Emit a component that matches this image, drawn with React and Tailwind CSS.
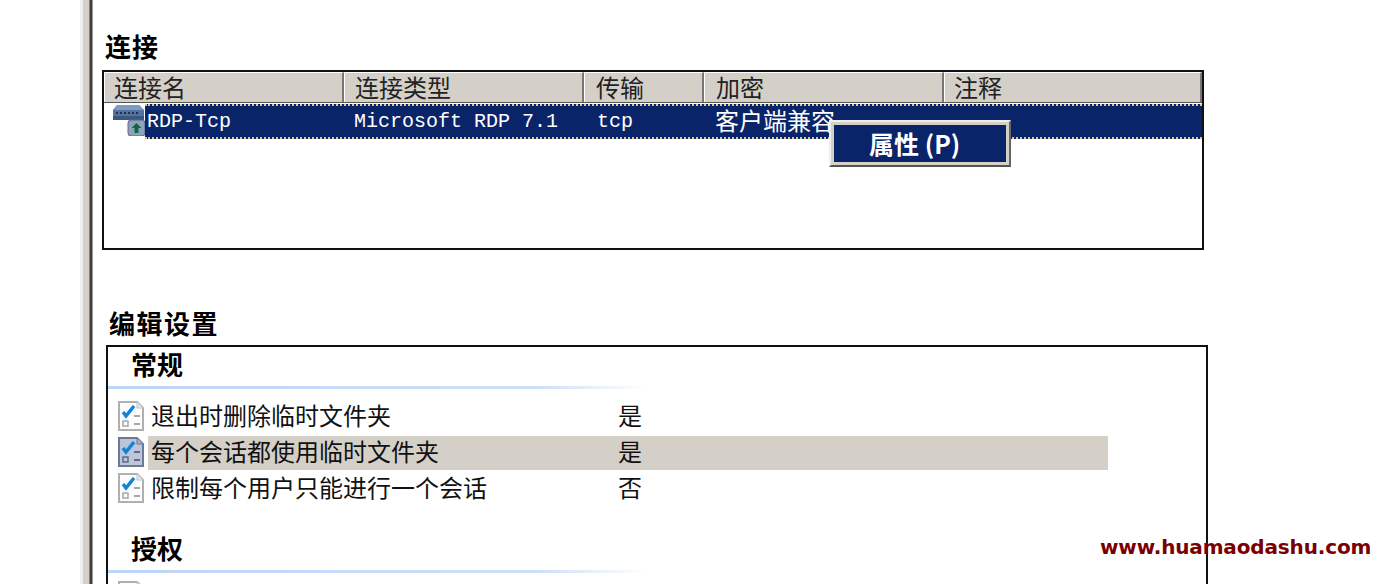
import React from 'react';

const cjk = "font-['Noto_Sans_CJK_SC','Liberation_Sans',sans-serif]";
const mono = "font-['Liberation_Mono',monospace]";

const columns = [
  { label: '连接名', width: 'w-[240px] pl-[9px]' },
  { label: '连接类型', width: 'w-[240px] pl-[10px]' },
  { label: '传输', width: 'w-[120px] pl-[11px]' },
  { label: '加密', width: 'w-[240px] pl-[11px]' },
  { label: '注释', width: 'flex-1 pl-[9px]' },
];

const NetworkIcon = () => (
  <svg width="36" height="32" viewBox="0 0 36 32" className="shrink-0">
    <path d="M5 1h22l5 5v10H1V6z" fill="#56739f" />
    <path d="M5 1h22l4 5H2z" fill="#7f9bc2" />
    <rect x="1" y="12" width="31" height="4" fill="#3d5680" />
    <path d="M4 9h2M8 9h2M12 9h2M16 9h2M20 9h2M24 9h2" stroke="#20304f" strokeWidth="2" />
    <rect x="16" y="16" width="17" height="16" rx="3" fill="#8fa1bd" stroke="#59688a" />
    <path d="M24.500 19l5 5h-3v5h-4v-5h-3z" fill="#0b6b3a" />
  </svg>
);

const PolicyIcon = ({ active }) => (
  <svg width="26" height="30" viewBox="0 0 26 30" className="shrink-0 self-center">
    <path d="M1 1h18l6 6v22H1z" fill={active ? '#bcc6d8' : '#fdfdfd'} stroke={active ? '#6b7896' : '#b0b0b0'} strokeWidth="2" />
    <path d="M19 1v6h6" fill={active ? '#a6b1c8' : '#e6e6e6'} stroke={active ? '#6b7896' : '#c4c4c4'} />
    <path d="M5 11l3 4 8-10" fill="none" stroke="#1283d8" strokeWidth="3.500" />
    <path d="M16 15h6M16 23h6" stroke={active ? '#5f6b88' : '#a8a8a8'} strokeWidth="2" />
    <rect x="5" y="20" width="5" height="5" fill="none" stroke={active ? '#5f6b88' : '#a8a8a8'} strokeWidth="1.500" />
  </svg>
);

const SectionHeading = ({ children }) => (
  <div>
    <div className="h-[39px] pl-[23px] text-[26px] leading-[34px] font-bold text-black">{children}</div>
    <div className="h-[3px] w-[540px] bg-gradient-to-r from-[#bcd5f5] via-[#cfe0f8] via-80% to-white"></div>
  </div>
);

const SettingRow = ({ label, value, active }) => (
  <div className="flex h-[36px] items-end pl-[10px]">
    <PolicyIcon active={active} />
    <div className={`ml-[4px] flex h-[34px] w-[960px] items-start ${active ? 'bg-[#d4d0c8]' : ''}`}>
      <span className="w-[470px] pl-[3px] text-[24px] leading-[30px] text-[#111]">{label}</span>
      <span className="text-[24px] leading-[30px] text-[#111]">{value}</span>
    </div>
  </div>
);

export default function App() {
  return (
    <div className={`relative flex h-[584px] w-[1400px] overflow-hidden bg-white ${cjk}`}>
      <div className="ml-[80px] flex w-[14px] shrink-0">
        <div className="w-[3px] bg-[#efefef]"></div>
        <div className="w-[6px] bg-[#d4d0c8]"></div>
        <div className="w-[1px] bg-[#808080]"></div>
        <div className="w-[2px] bg-[#404040]"></div>
        <div className="w-[1px] bg-[#9b9b9b]"></div>
      </div>

      <div className="flex-1 pl-[8px] pt-[30px]">
        <div className="h-[40px] pl-[3px] text-[26px] leading-[32px] font-bold tracking-[1px] text-black">连接</div>

        <div className="relative h-[180px] w-[1102px] border-2 border-[#111] bg-white">
          <div className="flex h-[31px] border-b border-[#555] bg-[#d4d0c8]">
            {columns.map((col) => (
              <div
                key={col.label}
                className={`${col.width} h-[30px] border-t border-l border-t-white border-l-white border-r-2 border-r-[#777] text-[24px] leading-[28px] text-[#222]`}
              >
                {col.label}
              </div>
            ))}
          </div>

          <div className="flex h-[36px] items-center">
            <div className="-mt-[3px] w-[41px] shrink-0 pl-[8px]">
              <NetworkIcon />
            </div>
            <div className="flex h-[35px] flex-1 items-center border-y-2 border-dotted border-[#d8c98a] bg-[#0a246a] text-white">
              <span className={`${mono} mt-[1px] w-[209px] pl-[2px] text-[20px]`}>RDP-Tcp</span>
              <span className={`${mono} mt-[1px] w-[243px] text-[20px]`}>Microsoft RDP 7.1</span>
              <span className={`${mono} mt-[1px] w-[118px] text-[20px]`}>tcp</span>
              <span className="-mt-[2px] text-[24px] leading-[30px]">客户端兼容</span>
            </div>
          </div>

          <div className="absolute left-[725px] top-[48px] h-[47px] w-[182px] border-2 border-t-[#eeeeee] border-l-[#eeeeee] border-r-[#666] border-b-[#555] bg-[#d4d0c8] p-[3px]">
            <div className="flex h-full items-center bg-[#0a246a] pl-[35px] text-[25px] font-bold text-white">
              属性 (P)
            </div>
          </div>
        </div>

        <div className="mt-[56px] h-[39px] pl-[7px] text-[26px] leading-[34px] font-bold tracking-[1.500px] text-black">编辑设置</div>

        <div className="ml-[4px] h-[300px] w-[1102px] border-2 border-[#111] bg-white">
          <SectionHeading>常规</SectionHeading>
          <div className="mt-[9px]">
            <SettingRow label="退出时删除临时文件夹" value="是" />
            <SettingRow label="每个会话都使用临时文件夹" value="是" active />
            <SettingRow label="限制每个用户只能进行一个会话" value="否" />
          </div>
          <div className="mt-[25px]">
            <SectionHeading>授权</SectionHeading>
          </div>
          <div className="ml-[10px] mt-[8px]">
            <PolicyIcon />
          </div>
        </div>
      </div>

      <div className="absolute left-[1100px] top-[531px] font-['DejaVu_Sans',sans-serif] text-[20px] font-bold leading-[32px] tracking-[-0.150px] text-[#7a0000]">
        www.huamaodashu.com
      </div>
    </div>
  );
}
